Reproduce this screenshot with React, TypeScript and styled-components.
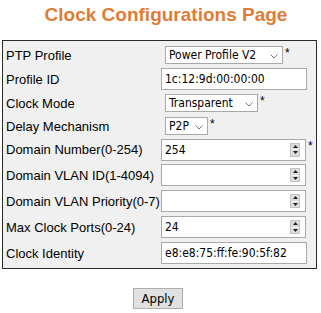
import React from "react";
import styled, { createGlobalStyle } from "styled-components";

const Global = createGlobalStyle`
  html, body { margin: 0; padding: 0; background: #fff; }
  body { font-family: "Liberation Sans", Arial, sans-serif; }
`;

const Page = styled.div`
  width: 321px;
  height: 313px;
  display: flex;
  flex-direction: column;
  align-items: center;
  box-sizing: border-box;
  padding-top: 3px;
`;

const Title = styled.h1`
  margin: 0;
  font-family: "Liberation Sans", Arial, sans-serif;
  font-weight: bold;
  font-size: 19px;
  line-height: 24px;
  color: #e07c35;
  padding-left: 11px;
`;

const Panel = styled.div`
  margin-top: 13px;
  margin-left: 2px;
  align-self: flex-start;
  width: 315px;
  box-sizing: border-box;
  border: 1px solid #2a2a2a;
  background: #f0f0f0;
  display: grid;
  grid-template-columns: 155px 1fr;
  grid-template-rows: 24px 24px 24px 22px 25px 26px 26px 26px 26px;
  align-items: center;
  padding: 2px 0;
`;

const Label = styled.div`
  font-size: 13px;
  color: #000;
  padding-left: 3px;
  white-space: nowrap;
`;

const Cell = styled.div`
  display: flex;
  align-items: center;
  padding-left: 3px;
`;

const fieldFont = `"DejaVu Sans Condensed", "DejaVu Sans", Tahoma, sans-serif`;

const Box = styled.div<{ $w: number; $h?: number; $indent?: number }>`
  position: relative;
  width: ${(p) => p.$w}px;
  height: ${(p) => p.$h ?? 22}px;
  margin-left: ${(p) => p.$indent ?? 0}px;
  box-sizing: border-box;
  border: 1px solid #a9a9a9;
  background: #fff;
  font-family: ${fieldFont};
  font-size: 12px;
  color: #000;
  display: flex;
  align-items: center;
  padding-left: 3px;
  white-space: nowrap;
`;

const Chevron = styled.svg`
  position: absolute;
  right: 4px;
  top: 50%;
  margin-top: -1px;
`;

const Spinner = styled.div`
  position: absolute;
  right: 5px;
  top: 3px;
  width: 10px;
  height: 14px;
  display: flex;
  flex-direction: column;
  background: #dcdcdc;
  border: 1px solid #c4c4c4;
  box-sizing: border-box;
`;

const SpinBtn = styled.div<{ $top?: boolean }>`
  flex: 1;
  display: flex;
  align-items: center;
  justify-content: center;
  border-bottom: ${(p) => (p.$top ? "1px solid #f4f4f4" : "none")};
`;

const Star = styled.span`
  font-size: 12px;
  margin-left: 2px;
  align-self: flex-start;
`;

const Footer = styled.div`
  margin-top: 19px;
  display: flex;
  justify-content: center;
  width: 100%;
  box-sizing: border-box;
  padding-right: 5px;
`;

const Button = styled.button`
  font-family: ${fieldFont};
  font-size: 13px;
  padding: 0;
  width: 50px;
  height: 21px;
  background: #e1e1e1;
  border: 1px solid #adadad;
  color: #000;
`;

const Select = ({ w, text }: { w: number; text: string }) => (
  <Box $w={w} $h={18} $indent={4}>
    {text}
    <Chevron width="8" height="5" viewBox="0 0 8 5">
      <path d="M0.5 0.5 L4 4 L7.5 0.5" fill="none" stroke="#7a7a7a" strokeWidth="1" />
    </Chevron>
  </Box>
);

const Num = ({ value }: { value: string }) => (
  <Box $w={145}>
    {value}
    <Spinner>
      <SpinBtn $top>
        <svg width="5" height="3" viewBox="0 0 5 3"><path d="M2.5 0 L5 3 L0 3 Z" fill="#222" /></svg>
      </SpinBtn>
      <SpinBtn>
        <svg width="5" height="3" viewBox="0 0 5 3"><path d="M0 0 L5 0 L2.5 3 Z" fill="#222" /></svg>
      </SpinBtn>
    </Spinner>
  </Box>
);

export default function App() {
  return (
    <Page>
      <Global />
      <Title>Clock Configurations Page</Title>
      <Panel>
        <Label>PTP Profile</Label>
        <Cell>
          <Select w={118} text="Power Profile V2" />
          <Star>*</Star>
        </Cell>
        <Label>Profile ID</Label>
        <Cell>
          <Box $w={146}>1c:12:9d:00:00:00</Box>
        </Cell>
        <Label>Clock Mode</Label>
        <Cell>
          <Select w={93} text="Transparent" />
          <Star>*</Star>
        </Cell>
        <Label>Delay Mechanism</Label>
        <Cell>
          <Select w={43} text="P2P" />
          <Star>*</Star>
        </Cell>
        <Label>Domain Number(0-254)</Label>
        <Cell>
          <Num value="254" />
          <Star>*</Star>
        </Cell>
        <Label>Domain VLAN ID(1-4094)</Label>
        <Cell>
          <Num value="" />
        </Cell>
        <Label>Domain VLAN Priority(0-7)</Label>
        <Cell>
          <Num value="" />
        </Cell>
        <Label>Max Clock Ports(0-24)</Label>
        <Cell>
          <Num value="24" />
        </Cell>
        <Label>Clock Identity</Label>
        <Cell>
          <Box $w={146}>e8:e8:75:ff:fe:90:5f:82</Box>
        </Cell>
      </Panel>
      <Footer>
        <Button>Apply</Button>
      </Footer>
    </Page>
  );
}
